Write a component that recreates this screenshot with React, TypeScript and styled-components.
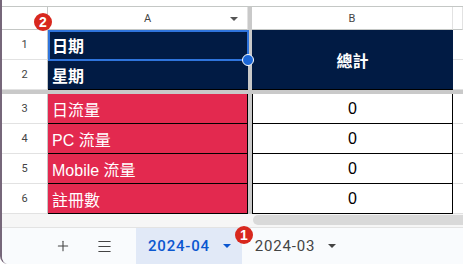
import styled, { createGlobalStyle } from "styled-components";
import { Plus, Menu } from "lucide-react";

const GlobalStyle = createGlobalStyle`
  html, body { margin: 0; padding: 0; background: #fff; }
  body { font-family: "Liberation Sans", "Noto Sans CJK TC", sans-serif; }
  * { box-sizing: border-box; }
`;

const NAVY = "#011b44";
const RED = "#e3294f";
const GRID = "#e2e2e2";
const HEAD_LINE = "#c4c7c5";
const FROZEN = "#c9c9c9";

const Window = styled.div`
  position: relative;
  width: 463px;
  height: 264px;
  overflow: hidden;
  border-left: 2px solid #76677a;
  border-bottom-left-radius: 8px;
  display: flex;
  flex-direction: column;
  background: #fff;
`;

const TopStrip = styled.div`
  height: 7px;
  border-bottom: 1px solid ${HEAD_LINE};
  background: #fff;
`;

const Sheet = styled.div`
  position: relative;
  display: grid;
  grid-template-columns: 46px 200px 4px 201px 1fr;
  grid-template-rows: 23px 30px 30px 4px 30px 30px 30px 30px;
`;

const Cell = styled.div<{
  $row: string;
  $col: string;
  $bg?: string;
  $fg?: string;
  $bold?: boolean;
  $center?: boolean;
  $bottom?: string;
  $right?: string;
  $left?: string;
}>`
  grid-row: ${(p) => p.$row};
  grid-column: ${(p) => p.$col};
  display: flex;
  align-items: center;
  justify-content: ${(p) => (p.$center ? "center" : "flex-start")};
  padding: 0 4px;
  background: ${(p) => p.$bg || "#fff"};
  color: ${(p) => p.$fg || "#000"};
  font-size: 16px;
  font-weight: ${(p) => (p.$bold ? 700 : 400)};
  border-bottom: ${(p) => (p.$bottom ? `1px solid ${p.$bottom}` : "none")};
  border-right: ${(p) => (p.$right ? `1px solid ${p.$right}` : "none")};
  border-left: ${(p) => (p.$left ? `1px solid ${p.$left}` : "none")};
  white-space: nowrap;
`;

const RowHead = styled.div<{ $row: string; $line?: string }>`
  grid-row: ${(p) => p.$row};
  grid-column: 1;
  display: flex;
  align-items: center;
  justify-content: center;
  font-family: Roboto, "Liberation Sans", sans-serif;
  font-size: 11px;
  color: #444;
  background: #fff;
  border-right: 1px solid ${HEAD_LINE};
  border-bottom: 1px solid ${(p) => p.$line || GRID};
`;

const ColHead = styled.div<{ $col: string }>`
  position: relative;
  grid-row: 1;
  grid-column: ${(p) => p.$col};
  display: flex;
  align-items: center;
  justify-content: center;
  font-family: Roboto, "Liberation Sans", sans-serif;
  font-size: 11px;
  color: #444;
  background: #fff;
  border-bottom: 1px solid ${HEAD_LINE};
  border-right: 1px solid ${GRID};
`;

const HeadArrow = styled.span`
  position: absolute;
  right: 9px;
  top: 10px;
  width: 0;
  height: 0;
  border-left: 4px solid transparent;
  border-right: 4px solid transparent;
  border-top: 4px solid #555;
`;

const FrozenCol = styled.div`
  grid-row: 1 / -1;
  grid-column: 3;
  background: ${FROZEN};
`;

const FrozenRow = styled.div`
  grid-row: 4;
  grid-column: 1 / -1;
  background: ${FROZEN};
`;

const Selection = styled.div`
  position: absolute;
  left: 46px;
  top: 23px;
  width: 201px;
  height: 31px;
  border: 2px solid #2f74dc;
  pointer-events: none;
`;

const Handle = styled.div`
  position: absolute;
  left: 240px;
  top: 47px;
  width: 12px;
  height: 12px;
  border-radius: 50%;
  background: #1a66d6;
  border: 1px solid #fff;
`;

const Badge = styled.div<{ $x: number; $y: number }>`
  position: absolute;
  left: ${(p) => p.$x - 9}px;
  top: ${(p) => p.$y - 9}px;
  width: 18px;
  height: 18px;
  border-radius: 50%;
  background: #d8281e;
  color: #fff;
  font-family: "Liberation Sans", sans-serif;
  font-weight: 700;
  font-size: 14px;
  display: flex;
  align-items: center;
  justify-content: center;
  z-index: 5;
`;

const ScrollArea = styled.div`
  height: 14px;
  display: flex;
  align-items: flex-end;
  padding-bottom: 2px;
  background: #f6f6f6;
  border-bottom: 1px solid #e3e3e3;
  padding-left: 251px;
`;

const Thumb = styled.div`
  flex: 1;
  height: 10px;
  border-radius: 5px 0 0 5px;
  background: #d9d9d9;
`;

const TabBar = styled.div`
  flex: 1;
  display: flex;
  align-items: center;
  background: #f9fbfd;
  padding-left: 47px;
`;

const IconButton = styled.div`
  width: 28px;
  height: 28px;
  display: flex;
  align-items: center;
  justify-content: center;
  color: #444;
  margin-right: 13px;
`;

const Tab = styled.div<{ $active?: boolean }>`
  align-self: stretch;
  display: flex;
  align-items: center;
  gap: 13px;
  padding: 0 11px 0 ${(p) => (p.$active ? 12 : 13)}px;
  margin-left: ${(p) => (p.$active ? 5 : 0)}px;
  background: ${(p) => (p.$active ? "#e1e9f7" : "transparent")};
  color: ${(p) => (p.$active ? "#0b57d0" : "#444")};
  font-family: Roboto, "Liberation Sans", sans-serif;
  font-size: 15px;
  font-weight: ${(p) => (p.$active ? 500 : 400)};
  letter-spacing: 0.8px;
`;

const TabArrow = styled.span<{ $active?: boolean }>`
  width: 0;
  height: 0;
  border-left: 4px solid transparent;
  border-right: 4px solid transparent;
  border-top: 4px solid ${(p) => (p.$active ? "#0b57d0" : "#444")};
`;

const labels = ["日流量", "PC 流量", "Mobile 流量", "註冊數"];

export default function App() {
  return (
    <>
      <GlobalStyle />
      <Window>
        <TopStrip />
        <Sheet>
          <RowHead $row="1" $line={HEAD_LINE} />
          <ColHead $col="2">
            A
            <HeadArrow />
          </ColHead>
          <ColHead $col="4">B</ColHead>
          <ColHead $col="5" />

          <RowHead $row="2">1</RowHead>
          <RowHead $row="3">2</RowHead>
          <Cell $row="2" $col="2" $bg={NAVY} $fg="#fff" $bold>日期</Cell>
          <Cell $row="3" $col="2" $bg={NAVY} $fg="#fff" $bold $bottom="#000">星期</Cell>
          <Cell $row="2 / span 2" $col="4" $bg={NAVY} $fg="#fff" $bold $center $bottom="#000">
            總計
          </Cell>
          <Cell $row="2" $col="5" $bottom={GRID} />
          <Cell $row="3" $col="5" $bottom={GRID} />

          <FrozenRow />
          <FrozenCol />

          {labels.map((label, i) => {
            const row = String(i + 5);
            return [
              <RowHead key={"h" + i} $row={row}>{i + 3}</RowHead>,
              <Cell key={"a" + i} $row={row} $col="2" $bg={RED} $fg="#fff" $bottom="#000" $right="#000">
                {label}
              </Cell>,
              <Cell key={"b" + i} $row={row} $col="4" $center $bottom="#000" $right="#000" $left="#000">
                0
              </Cell>,
              <Cell key={"c" + i} $row={row} $col="5" $bottom={GRID} />,
            ];
          })}

          <Selection />
          <Handle />
        </Sheet>
        <ScrollArea>
          <Thumb />
        </ScrollArea>
        <TabBar>
          <IconButton>
            <Plus size={16} strokeWidth={1.6} />
          </IconButton>
          <IconButton>
            <Menu size={17} strokeWidth={1.6} />
          </IconButton>
          <Tab $active>
            2024-04
            <TabArrow $active />
          </Tab>
          <Tab>
            2024-03
            <TabArrow />
          </Tab>
        </TabBar>
        <Badge $x={41} $y={22}>2</Badge>
        <Badge $x={242} $y={235}>1</Badge>
      </Window>
    </>
  );
}
